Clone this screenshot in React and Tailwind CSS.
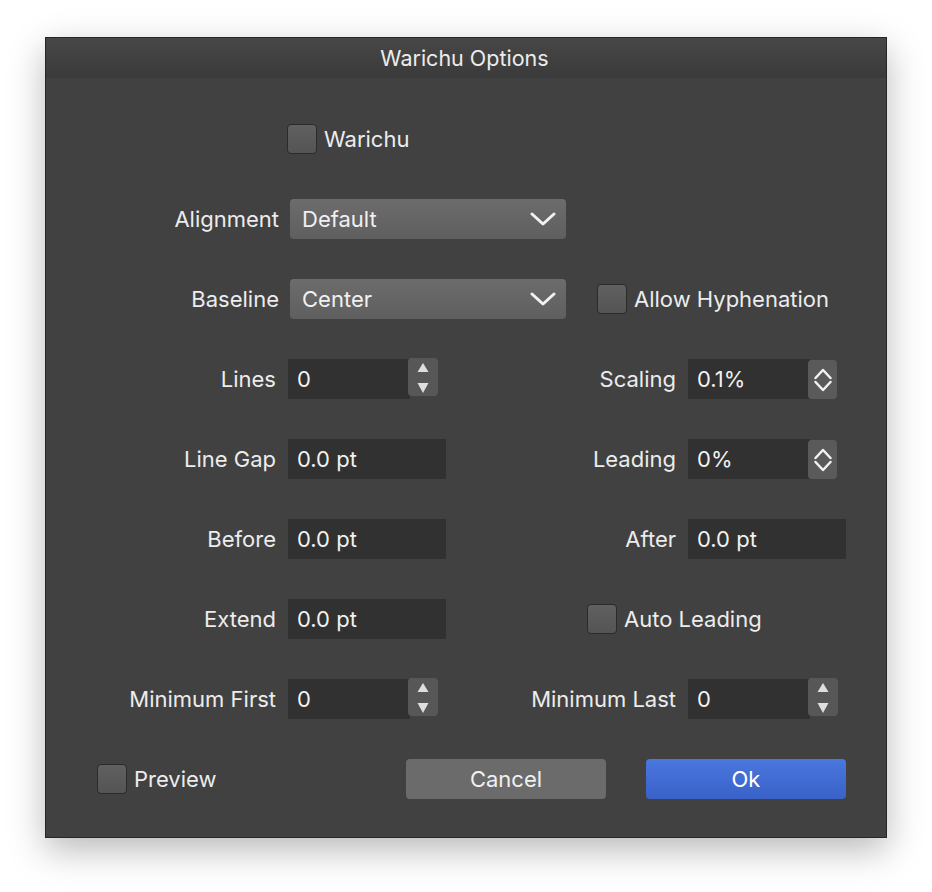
import React from "react";

const font = { fontFamily: "Inter, 'Noto Sans', sans-serif" };

function Checkbox({ label, className = "" }) {
  return (
    <div className={"flex items-center gap-[7px] " + className}>
      <div className="w-[30px] h-[30px] rounded-[4px] border border-[#2b2b2b] bg-linear-to-b from-[#606060] to-[#545454]" />
      <span className="text-[22px] text-[#ececec] pt-[1px]">{label}</span>
    </div>
  );
}

function Popup({ value }) {
  return (
    <div className="ml-[11px] w-[276px] h-[40px] rounded-[4px] bg-linear-to-b from-[#6c6c6c] to-[#5f5f5f] flex items-center justify-between pl-[12px] pr-[10px]">
      <span className="text-[22px] text-[#f0f0f0] pt-[1px]">{value}</span>
      <svg width="26" height="14" viewBox="0 0 26 14">
        <polyline points="2,2 13,12 24,2" fill="none" stroke="#f2f2f2" strokeWidth="3" strokeLinecap="round" strokeLinejoin="round" />
      </svg>
    </div>
  );
}

function Field({ value, w = "w-[158px]" }) {
  return (
    <div className={w + " h-[40px] bg-[#313131] flex items-center pl-[9px]"}>
      <span className="text-[22px] text-[#f0f0f0] pt-[1px]">{value}</span>
    </div>
  );
}

function Stepper() {
  return (
    <div className="ml-[-2px] w-[30px] h-[38px] rounded-[4px] bg-[#575757] self-start mt-[19px]">
      <svg width="30" height="38" viewBox="0 0 30 38">
        <polygon points="9.5,14 20.5,14 15,5" fill="#dedede" />
        <polygon points="9.5,25 20.5,25 15,35" fill="#dedede" />
      </svg>
    </div>
  );
}

function UpDown() {
  return (
    <div className="ml-[-2px] w-[29px] h-[39px] rounded-[4px] bg-[#5a5a5a]">
      <svg width="29" height="39" viewBox="0 0 29 39">
        <polyline points="7.5,18 15,10 22.5,18" fill="none" stroke="#f2f2f2" strokeWidth="2.5" strokeLinecap="round" strokeLinejoin="round" />
        <polyline points="7.5,22 15,30 22.5,22" fill="none" stroke="#f2f2f2" strokeWidth="2.5" strokeLinecap="round" strokeLinejoin="round" />
      </svg>
    </div>
  );
}

function Label({ children, w = "w-[230px]" }) {
  return (
    <div className={w + " text-right text-[22px] text-[#ececec] pt-[1px]"}>{children}</div>
  );
}

function Row({ children }) {
  return <div className="h-[80px] flex items-center">{children}</div>;
}

export default function App() {
  return (
    <div className="min-h-screen bg-white pt-[37px] pl-[45px]" style={font}>
      <div className="w-[842px] h-[801px] border border-[#262626] bg-[#414141] shadow-[0_12px_34px_rgba(0,0,0,0.28)] flex flex-col">
        <div className="h-[40px] bg-linear-to-b from-[#474747] to-[#3a3a3a] flex items-center justify-center">
          <span className="text-[21.5px] text-[#ececec] pt-[1px] mr-[3px]">Warichu Options</span>
        </div>

        <div className="pt-[21px]">
          <Row>
            <div className="w-[229px]" />
            <Checkbox label="Warichu" className="ml-[12px]" />
          </Row>

          <Row>
            <Label w="w-[233px]">Alignment</Label>
            <Popup value="Default" />
          </Row>

          <Row>
            <Label w="w-[233px]">Baseline</Label>
            <Popup value="Center" />
            <Checkbox label="Allow Hyphenation" className="ml-[31px]" />
          </Row>

          <Row>
            <Label>Lines</Label>
            <div className="ml-[12px] w-[188px] flex items-center h-[80px]">
              <Field value="0" w="w-[122px]" />
              <Stepper />
            </div>
            <Label w="w-[200px]">Scaling</Label>
            <div className="ml-[12px] flex items-center">
              <Field value="0.1%" w="w-[122px]" />
              <UpDown />
            </div>
          </Row>

          <Row>
            <Label>Line Gap</Label>
            <div className="ml-[12px] w-[188px]">
              <Field value="0.0 pt" />
            </div>
            <Label w="w-[200px]">Leading</Label>
            <div className="ml-[12px] flex items-center">
              <Field value="0%" w="w-[122px]" />
              <UpDown />
            </div>
          </Row>

          <Row>
            <Label>Before</Label>
            <div className="ml-[12px] w-[188px]">
              <Field value="0.0 pt" />
            </div>
            <Label w="w-[200px]">After</Label>
            <div className="ml-[12px]">
              <Field value="0.0 pt" />
            </div>
          </Row>

          <Row>
            <Label>Extend</Label>
            <div className="ml-[12px] w-[188px]">
              <Field value="0.0 pt" />
            </div>
            <Checkbox label="Auto Leading" className="ml-[111px]" />
          </Row>

          <Row>
            <Label>Minimum First</Label>
            <div className="ml-[12px] w-[188px] flex items-center h-[80px]">
              <Field value="0" w="w-[122px]" />
              <Stepper />
            </div>
            <Label w="w-[200px]">Minimum Last</Label>
            <div className="ml-[12px] flex items-center h-[80px]">
              <Field value="0" w="w-[122px]" />
              <Stepper />
            </div>
          </Row>

          <Row>
            <Checkbox label="Preview" className="ml-[51px]" />
            <div className="ml-auto mr-[40px] flex items-center gap-[40px]">
              <div className="w-[200px] h-[40px] rounded-[4px] bg-[#6b6b6b] flex items-center justify-center text-[22px] text-[#f0f0f0] pt-[1px]">
                Cancel
              </div>
              <div className="w-[200px] h-[40px] rounded-[4px] bg-linear-to-b from-[#4a77dd] to-[#3a62c9] flex items-center justify-center text-[22px] text-white pt-[1px]">
                Ok
              </div>
            </div>
          </Row>
        </div>
      </div>
    </div>
  );
}
